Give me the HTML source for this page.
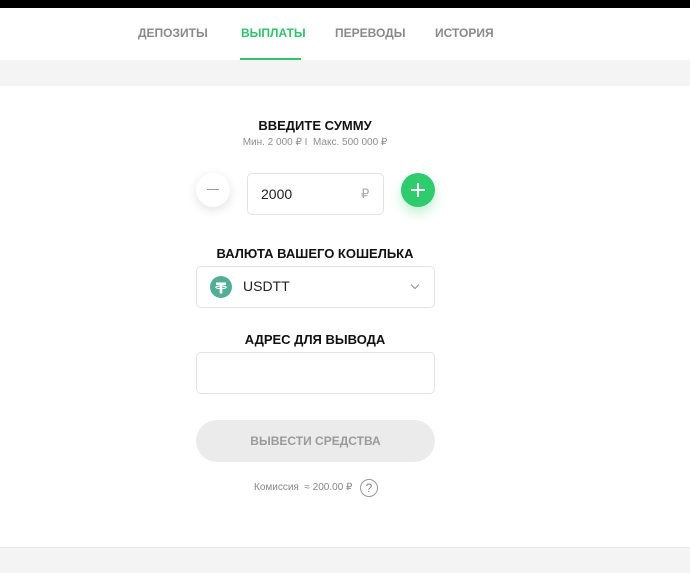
<!DOCTYPE html>
<html><head><meta charset="utf-8"><style>
*{margin:0;padding:0;box-sizing:border-box}
body{width:690px;height:573px;background:#fff;font-family:"Liberation Sans",sans-serif;position:relative;overflow:hidden}
.a{position:absolute}
.tab{position:absolute;top:26px;font-size:12px;font-weight:bold;color:#8a8a8a}
.c{position:absolute;left:0;width:630px;text-align:center}
.box{position:absolute;border:1px solid #e3e3e3;border-radius:5px;background:#fff}
</style></head><body>
<div class="a" style="left:0;top:0;width:690px;height:8px;background:#000"></div>
<div class="a" style="left:0;top:60px;width:690px;height:26px;background:#f4f4f4"></div>
<div class="a" style="left:0;top:547px;width:690px;height:26px;background:#f4f4f4;border-top:1px solid #e8e8e8"></div>
<div class="tab" style="left:138px">ДЕПОЗИТЫ</div>
<div class="tab" style="left:241px;color:#2fc36a">ВЫПЛАТЫ</div>
<div class="tab" style="left:335px">ПЕРЕВОДЫ</div>
<div class="tab" style="left:435px">ИСТОРИЯ</div>
<div class="a" style="left:240px;top:58px;width:61px;height:2px;background:#2fc36a"></div>

<div class="c" style="top:118px;font-size:13px;font-weight:bold;color:#111">ВВЕДИТЕ СУММУ</div>
<div class="c" style="top:137px;font-size:10px;color:#8f8f8f">Мин. 2 000 ₽ I&nbsp; Макс. 500 000 ₽</div>

<div class="a" style="left:196px;top:173px;width:34px;height:34px;border-radius:50%;background:#fff;box-shadow:0 3px 10px rgba(0,0,0,0.12)"></div>
<div class="a" style="left:207px;top:189px;width:12px;height:1px;background:#999"></div>
<div class="box" style="left:247px;top:173px;width:137px;height:42px"></div>
<div class="a" style="left:261px;top:186px;font-size:14px;color:#222">2000</div>
<div class="a" style="left:361px;top:186px;font-size:13px;color:#aaa">₽</div>
<div class="a" style="left:401px;top:173px;width:34px;height:34px;border-radius:50%;background:#2fcc6e;box-shadow:0 6px 12px rgba(47,204,110,0.3)"></div>
<div class="a" style="left:411px;top:189px;width:14px;height:2px;background:#fff"></div>
<div class="a" style="left:417px;top:183px;width:2px;height:14px;background:#fff"></div>

<div class="c" style="top:246px;font-size:13px;font-weight:bold;color:#111">ВАЛЮТА ВАШЕГО КОШЕЛЬКА</div>
<div class="box" style="left:196px;top:266px;width:239px;height:42px"></div>
<svg class="a" style="left:210px;top:276px" width="22" height="22" viewBox="0 0 22 22"><circle cx="11" cy="11" r="11" fill="#50af95"/><path d="M6 6.5h10v2.6h-3.7v8.4h-2.6V9.1H6z" fill="#fff"/><ellipse cx="11" cy="11.3" rx="5.3" ry="1.3" fill="none" stroke="#fff" stroke-width="1"/></svg>
<div class="a" style="left:243px;top:278px;font-size:14px;color:#222">USDTT</div>
<svg class="a" style="left:410px;top:283px" width="10" height="7" viewBox="0 0 10 7"><path d="M1 1.5l4 4 4-4" fill="none" stroke="#999" stroke-width="1.2"/></svg>

<div class="c" style="top:332px;font-size:13px;font-weight:bold;color:#111">АДРЕС ДЛЯ ВЫВОДА</div>
<div class="box" style="left:196px;top:352px;width:239px;height:42px"></div>

<div class="a" style="left:196px;top:420px;width:239px;height:42px;border-radius:21px;background:#ebebeb;text-align:center;line-height:42px;font-size:12px;font-weight:bold;color:#9a9a9a">ВЫВЕСТИ СРЕДСТВА</div>

<div class="a" style="left:254px;top:482px;font-size:10px;color:#888">Комиссия&nbsp; ≈ 200.00 ₽</div>
<div class="a" style="left:360px;top:479px;width:18px;height:18px;border-radius:50%;border:1px solid #999;text-align:center;line-height:16px;font-size:12px;color:#888">?</div>
</body></html>
